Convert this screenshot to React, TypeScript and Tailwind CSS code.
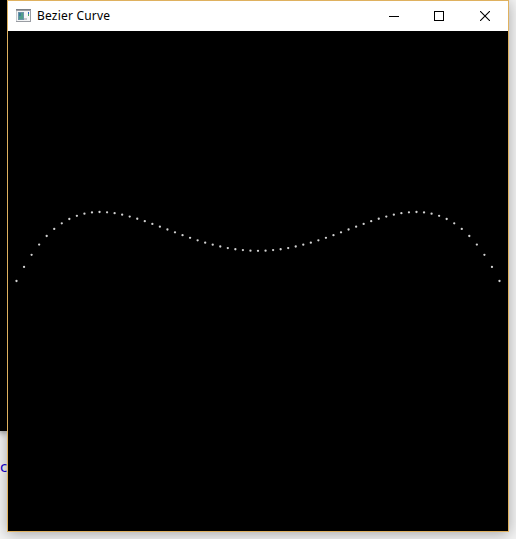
const STEPS = 64;

// Quartic Bezier through control points at y = 281, 39.5, 522.5, 39.5, 281.
const points = Array.from({ length: STEPS + 1 }, (_, i) => {
  const t = i / STEPS;
  const s = t * (1 - t);
  return { x: 8.5 + 483 * t, y: 250 - 966 * s + 3381 * s * s };
});

function TitleBar() {
  return (
    <header className="flex h-[30px] shrink-0 items-center bg-white pl-2 text-black">
      <svg width="15" height="13" viewBox="0 0 15 13" className="mb-px shrink-0" shapeRendering="crispEdges">
        <path fill="#9a9da3" d="M0 0h15v13H0z" />
        <path fill="#f4f5f6" d="M0 2h14v10H0z" />
        <path fill="#7c8188" d="M0 0h15v1H0z" />
        <path fill="#c9cdd1" d="M0 2h1v10H0z" />
        <path fill="#6b93a8" d="M2 3h6v8H2z" />
        <path fill="#4f9d8a" d="M3 4h4v6H3z" />
        <path fill="#3f7d9b" d="M3 4h2v3H3z" />
        <path fill="#c4c9ce" d="M8 9h3v2H8z" />
        <path fill="#2c5fc4" d="M12 3h1v2h-1z" />
        <path fill="#4caa65" d="M12 5h1v2h-1z" />
      </svg>
      <span className="ml-[6px] whitespace-nowrap font-['Noto_Sans','Open_Sans',sans-serif] text-[12px] leading-[18px] tracking-[0.2px]">
        Bezier Curve
      </span>
      <div className="ml-auto flex h-full">
        <button aria-label="Minimize" className="flex w-[45px] items-center justify-center">
          <svg width="11" height="11" shapeRendering="crispEdges">
            <path d="M1 5h10v1H1z" fill="black" />
          </svg>
        </button>
        <button aria-label="Maximize" className="flex w-[46px] items-center justify-center">
          <svg width="10" height="10" shapeRendering="crispEdges">
            <path d="M.5 .5h9v9h-9z" fill="none" stroke="black" />
          </svg>
        </button>
        <button aria-label="Close" className="flex w-[46px] items-center justify-center">
          <svg width="10" height="10">
            <path d="M0 0l10 10M10 0L0 10" fill="none" stroke="black" strokeWidth="1.1" />
          </svg>
        </button>
      </div>
    </header>
  );
}

export default function App() {
  return (
    <main className="relative h-[539px] w-[516px] overflow-hidden bg-[#f4f4f4]">
      <div className="absolute left-0 top-0 h-[431px] w-[7px] bg-black shadow-[0_1px_7px_rgba(0,0,0,0.65)]" />
      <span className="absolute left-0 top-[457px] font-['Noto_Sans',sans-serif] text-[15px] leading-[18px] text-[#1400d2]">c</span>
      <section className="absolute left-[7px] top-0 flex h-[532px] w-[502px] flex-col border border-[#dfb15f] bg-black shadow-[0_2px_14px_rgba(0,0,0,0.32)]">
        <TitleBar />
        <svg width="500" height="500" className="block shrink-0 bg-black">
          {points.map((p, i) => (
            <circle key={i} cx={p.x} cy={p.y} r="1.15" fill="#d2d2d2" />
          ))}
        </svg>
      </section>
    </main>
  );
}
